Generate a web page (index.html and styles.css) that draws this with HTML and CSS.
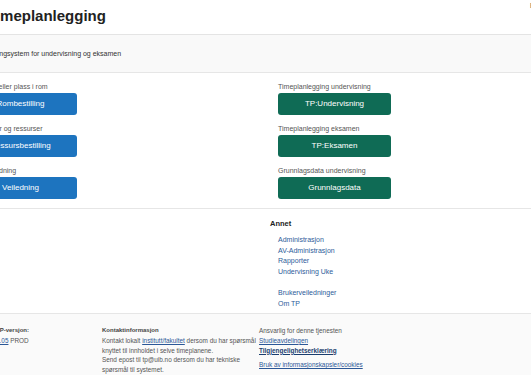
FILE: index.html
```html
<!DOCTYPE html>
<html lang="no">
<head>
  <meta charset="UTF-8" />
  <meta name="viewport" content="width=device-width, initial-scale=1.0" />
  <title>Timeplanlegging</title>
  <link rel="stylesheet" href="styles.css">
</head>
<body>
  <header class="top">
    <div class="wrap top-inner">
      <h1 class="title">Timeplanlegging</h1>
      <a class="lang" href="#">English</a>
    </div>
  </header>

  <div class="intro">
    <div class="wrap">
      <p>Timeplanleggingsystem for undervisning og eksamen</p>
    </div>
  </div>

  <main class="apps">
    <div class="wrap apps-grid">
      <div class="col">
        <div class="app">
          <span class="app-label">Bestill rom eller plass i rom</span>
          <a class="btn btn-blue" href="#">Rombestilling</a>
        </div>
        <div class="app">
          <span class="app-label">Bestill utstyr og ressurser</span>
          <a class="btn btn-blue" href="#">Ressursbestilling</a>
        </div>
        <div class="app">
          <span class="app-label">Brukerveiledning</span>
          <a class="btn btn-blue" href="#">Veiledning</a>
        </div>
      </div>
      <div class="col">
        <div class="app">
          <span class="app-label">Timeplanlegging undervisning</span>
          <a class="btn btn-green" href="#">TP:Undervisning</a>
        </div>
        <div class="app">
          <span class="app-label">Timeplanlegging eksamen</span>
          <a class="btn btn-green" href="#">TP:Eksamen</a>
        </div>
        <div class="app">
          <span class="app-label">Grunnlagsdata undervisning</span>
          <a class="btn btn-green" href="#">Grunnlagsdata</a>
        </div>
      </div>
    </div>
  </main>

  <section class="other">
    <div class="wrap other-grid">
      <div></div>
      <div>
        <h2>Annet</h2>
        <ul class="links">
          <li><a href="#">Administrasjon</a></li>
          <li><a href="#">AV-Administrasjon</a></li>
          <li><a href="#">Rapporter</a></li>
          <li><a href="#">Undervisning Uke</a></li>
        </ul>
        <ul class="links">
          <li><a href="#">Brukerveiledninger</a></li>
          <li><a href="#">Om TP</a></li>
        </ul>
      </div>
    </div>
  </section>

  <footer class="foot">
    <div class="wrap foot-grid">
      <div>
        <h3>TP-versjon:</h3>
        <p><a href="#">2.05</a> PROD</p>
      </div>
      <div>
        <h3>Kontaktinformasjon</h3>
        <p>Kontakt lokalt <a href="#">institutt/fakultet</a> dersom du har spørsmål knyttet til innholdet i selve timeplanene.</p>
        <p>Send epost til tp@uib.no dersom du har tekniske spørsmål til systemet.</p>
      </div>
      <div>
        <p class="muted">Ansvarlig for denne tjenesten</p>
        <p><a href="#">Studieavdelingen</a></p>
        <p><a class="strong" href="#">Tilgjengelighetserklæring</a></p>
        <p class="spaced"><a href="#">Bruk av informasjonskapsler/cookies</a></p>
      </div>
    </div>
  </footer>
</body>
</html>
```

FILE: styles.css
```css
html, body {
  overflow-x: hidden;
}
body {
  margin: 0;
  font-family: 'Liberation Sans', Arial, sans-serif;
  background: #fff;
  color: #333;
}
.top, .intro, .apps, .other, .foot {
  display: flex;
  justify-content: center;
}
.wrap {
  flex: none;
  width: 619px;
  box-sizing: border-box;
}
.top {
  border-bottom: 1px solid #e4e4e4;
}
.top-inner {
  display: flex;
  justify-content: space-between;
  align-items: flex-start;
  height: 34px;
}
.title {
  margin: 0 0 0 31px;
  font-size: 15px;
  line-height: 32px;
  font-weight: bold;
  color: #222;
}
.lang {
  margin: 2px 22px 0 0;
  font-size: 7px;
  color: #2f4f48;
  text-decoration: none;
}
.intro {
  background: #f9f9f9;
  border-bottom: 1px solid #e6e6e6;
}
.intro p {
  margin: 0;
  font-size: 7px;
  line-height: 37px;
  color: #333;
}
.apps {
  border-bottom: 1px solid #e6e6e6;
}
.apps-grid {
  display: grid;
  grid-template-columns: 314px 1fr;
  padding: 9px 0 0 8px;
}
.app {
  display: flex;
  flex-direction: column;
  align-items: flex-start;
  margin-bottom: 9px;
}
.app-label {
  font-size: 7px;
  line-height: 9px;
  margin-bottom: 2px;
  color: #555;
}
.btn {
  display: block;
  width: 113px;
  height: 22px;
  line-height: 22px;
  text-align: center;
  font-size: 8px;
  color: #fff;
  border-radius: 3px;
  text-decoration: none;
}
.btn-blue {
  background: #1d74bf;
}
.btn-green {
  background: #0f6b55;
}
.other-grid {
  display: grid;
  grid-template-columns: 306px 1fr;
  padding: 10px 0 4px 8px;
}
.other h2 {
  margin: 0 0 6px;
  font-size: 7.5px;
  line-height: 10px;
  color: #222;
}
.links {
  list-style: none;
  margin: 0;
  padding: 0 0 0 8px;
  font-size: 7px;
  line-height: 10.5px;
}
.links + .links {
  margin-top: 11px;
}
.links a {
  color: #2e5c9a;
  text-decoration: none;
}
.foot {
  border-top: 1px solid #e6e6e6;
  background: #fafafa;
}
.foot-grid {
  display: grid;
  grid-template-columns: 106px 157px 1fr;
  padding: 12px 0 20px 40px;
  font-size: 6.4px;
  line-height: 9.8px;
  color: #555;
}
.foot h3 {
  margin: 0;
  font-size: 6px;
  line-height: 9.8px;
  font-weight: bold;
  color: #444;
}
.foot p {
  margin: 0;
}
.foot a {
  color: #2b5797;
}
.foot a.strong {
  font-weight: bold;
  color: #1a3d6e;
}
.foot .spaced {
  margin-top: 5px;
}
```
